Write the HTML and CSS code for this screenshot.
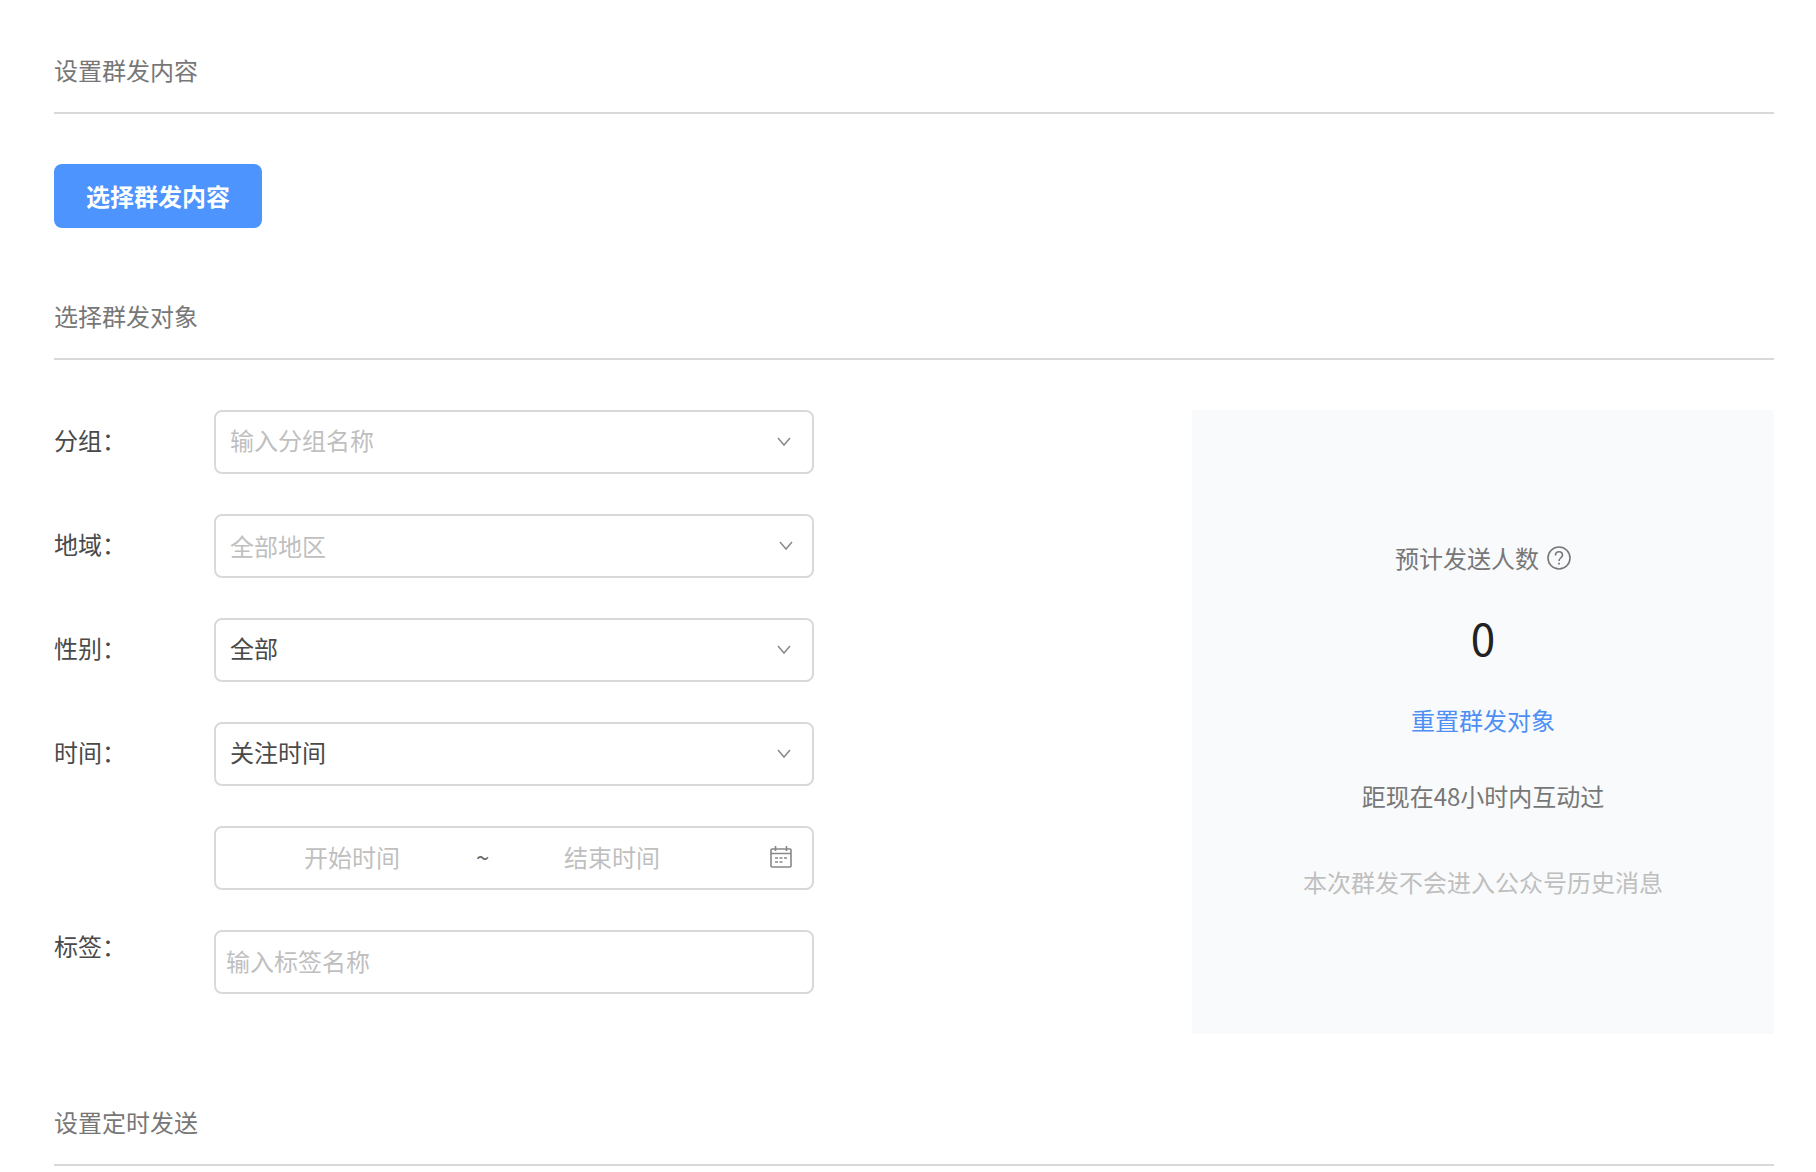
FILE: index.html
```html
<!DOCTYPE html>
<html lang="zh-CN">
<head>
  <meta charset="utf-8">
  <meta name="viewport" content="width=device-width, initial-scale=1">
  <title>群发</title>
  <link rel="stylesheet" href="styles.css">
</head>
<body>
  <main class="page">
    <section class="section">
      <h2 class="section-title">设置群发内容</h2>
      <button class="primary-button" type="button">选择群发内容</button>
    </section>

    <section class="section">
      <h2 class="section-title">选择群发对象</h2>
      <div class="audience">
        <form class="filters">
          <div class="row">
            <label class="label" for="group">分组：</label>
            <div class="control">
              <select class="field select is-empty" id="group"><option>输入分组名称</option></select>
              <svg class="chevron" viewBox="0 0 14 10" aria-hidden="true"><path d="M1 1l6 7 6-7"/></svg>
            </div>
          </div>
          <div class="row">
            <label class="label" for="region">地域：</label>
            <div class="control">
              <select class="field select cascade is-empty" id="region"><option>全部地区</option></select>
              <svg class="chevron chevron-cascade" viewBox="0 0 14 10" aria-hidden="true"><path d="M1 1l6 7 6-7"/></svg>
            </div>
          </div>
          <div class="row">
            <label class="label" for="gender">性别：</label>
            <div class="control">
              <select class="field select" id="gender"><option>全部</option></select>
              <svg class="chevron" viewBox="0 0 14 10" aria-hidden="true"><path d="M1 1l6 7 6-7"/></svg>
            </div>
          </div>
          <div class="row">
            <label class="label" for="time">时间：</label>
            <div class="control">
              <select class="field select" id="time"><option>关注时间</option></select>
              <svg class="chevron" viewBox="0 0 14 10" aria-hidden="true"><path d="M1 1l6 7 6-7"/></svg>
            </div>
          </div>
          <div class="row">
            <div class="control field range">
              <input class="range-input" type="text" placeholder="开始时间" aria-label="开始时间">
              <span class="range-separator">~</span>
              <input class="range-input" type="text" placeholder="结束时间" aria-label="结束时间">
              <svg class="calendar" viewBox="0 0 22 22" aria-hidden="true">
                <rect x="1" y="3" width="20" height="18" rx="1"/>
                <path d="M1 7.5h20M5.500 0v5M16.500 0v5"/>
                <path class="calendar-days" d="M5 12h3M9.500 12h3M14 12h3M5 16h3M9.500 16h3"/>
              </svg>
            </div>
          </div>
          <div class="row row-top">
            <label class="label" for="tag">标签：</label>
            <div class="control">
              <input class="field tag-input" id="tag" type="text" placeholder="输入标签名称">
            </div>
          </div>
        </form>

        <aside class="summary">
          <p class="summary-title">预计发送人数
            <svg class="help" viewBox="0 0 24 24" role="img" aria-label="帮助">
              <circle cx="12" cy="12" r="11"/>
              <path d="M8.500 9.500c0-2.300 1.500-3.800 3.500-3.800s3.500 1.400 3.500 3.300c0 2.700-3.500 2.900-3.500 6"/>
              <path class="help-dot" d="M12 16.800v1.800"/>
            </svg>
          </p>
          <p class="summary-count">0</p>
          <a class="summary-reset" href="#">重置群发对象</a>
          <p class="summary-text">距现在48小时内互动过</p>
          <p class="summary-note">本次群发不会进入公众号历史消息</p>
        </aside>
      </div>
    </section>

    <section class="section">
      <h2 class="section-title">设置定时发送</h2>
    </section>
  </main>
</body>
</html>
```
FILE: styles.css
```css
* {
  box-sizing: border-box;
}

body {
  margin: 0;
  background: #fff;
  color: #4a4a4a;
  font-family: "Noto Sans CJK SC", sans-serif;
  font-size: 24px;
  line-height: 36px;
}

input,
select,
button {
  margin: 0;
  color: inherit;
  font: inherit;
}

p,
h2 {
  margin: 0;
}

.page {
  display: flex;
  flex-direction: column;
  gap: 70px;
  padding: 52px 42px 0 54px;
}

.section-title {
  margin-bottom: 50px;
  padding-bottom: 24px;
  border-bottom: 2px solid #d9d9d9;
  color: #777;
  font-size: 24px;
  font-weight: 400;
}

.section:last-child .section-title {
  margin-bottom: 0;
}

.primary-button {
  display: block;
  height: 64px;
  padding: 0 32px;
  border: 0;
  border-radius: 8px;
  background: #4d94ff;
  color: #fff;
  font-weight: 700;
}

.audience {
  display: grid;
  grid-template-columns: minmax(0, 760px) minmax(0, 582px);
  justify-content: space-between;
}

.filters {
  display: flex;
  flex-direction: column;
  gap: 40px;
}

.row {
  display: flex;
  align-items: center;
}

.row-top {
  align-items: flex-start;
}

.label {
  flex: none;
  width: 160px;
  padding-bottom: 4px;
  line-height: 32px;
}

.control {
  display: grid;
  flex: 1;
  align-items: center;
  min-width: 0;
  margin-left: auto;
}

.field {
  width: 100%;
  height: 64px;
  border: 2px solid #d9d9d9;
  border-radius: 8px;
  background: #fff;
  outline: 0;
}

/* The arrow shares the grid cell of its drop-down. */
.select,
.chevron {
  grid-area: 1 / 1;
}

.select {
  appearance: none;
  padding: 0 48px 4px 14px;
}

.select.cascade {
  padding-bottom: 0;
}

.select.is-empty,
::placeholder {
  color: #bfbfbf;
  opacity: 1;
}

.chevron {
  justify-self: end;
  width: 14px;
  height: 10px;
  margin-right: 23px;
  fill: none;
  stroke: #8c8c8c;
  stroke-width: 1.6;
  pointer-events: none;
}

.chevron-cascade {
  margin-right: 21px;
}

.range {
  display: flex;
  flex: 0 1 600px;
  padding: 0 20px 2px 12px;
}

.range-input {
  flex: 0 1 248px;
  min-width: 0;
  padding: 0;
  border: 0;
  background: none;
  outline: 0;
  text-align: center;
}

.range-separator {
  width: 12px;
  color: #666;
  text-align: center;
}

.calendar {
  flex: none;
  width: 22px;
  height: 22px;
  margin-left: auto;
  fill: none;
  stroke: #888;
  stroke-width: 1.6;
}

.calendar-days {
  stroke-width: 1.4;
}

.tag-input {
  padding: 0 10px 4px;
}

.summary {
  display: flex;
  flex-direction: column;
  align-items: center;
  min-height: 624px;
  padding-top: 130px;
  background: #f9fafb;
  color: #777;
}

.summary-title {
  display: flex;
  align-items: center;
  gap: 8px;
}

.help {
  width: 24px;
  height: 24px;
  fill: none;
  stroke: #777;
  stroke-width: 1.6;
}

.help-dot {
  stroke-width: 1.8;
}

.summary-count {
  margin: 31px 0 35px;
  color: #222;
  font-size: 44px;
  line-height: 60px;
}

.summary-reset {
  color: #4d8ff5;
  text-decoration: none;
}

.summary-text {
  margin-top: 40px;
}

.summary-note {
  margin-top: 50px;
  color: #bfbfbf;
}
```
